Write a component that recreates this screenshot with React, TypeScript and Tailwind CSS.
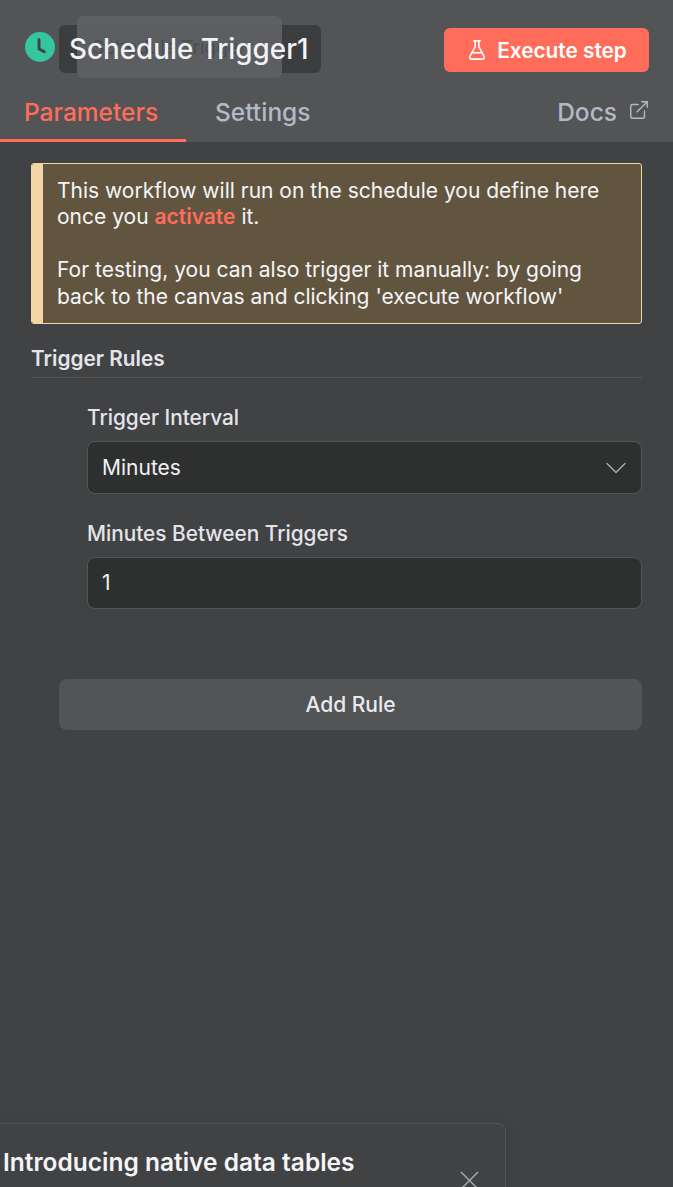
import { ChevronDown, ExternalLink, FlaskConical, X } from 'lucide-react';

const font = "font-['Inter',sans-serif]";

function ClockBadge() {
  return (
    <svg className="ml-[1px] mt-[-6px] h-[30px] w-[30px] shrink-0" viewBox="0 0 31 31">
      <circle cx="15.5" cy="15.5" r="15.5" fill="#35c6a0" />
      <path d="M14.5 8v9.5l5.5 3" fill="none" stroke="#414244" strokeWidth="3" strokeLinecap="round" strokeLinejoin="round" />
    </svg>
  );
}

function Header() {
  return (
    <div className="bg-[#535456]">
      <div className="flex h-[100px] items-center pl-[24px] pr-[24px]">
        <ClockBadge />
        <div className="relative ml-[4px] mt-[-2px] flex h-[48px] w-[262px] items-center rounded-[6px] bg-[#3c3d3f] pl-[10px]">
          <div className="absolute left-[18px] top-[-9px] h-[62px] w-[205px] rounded-[6px] bg-[#5f6265]/90" />
          <span className="absolute left-[33px] top-[10px] text-[19px] leading-[26px] text-[#4b4d4f]">Schedule Trigger</span>
          <span className="relative text-[27.8px] font-medium leading-[34px] text-[#f1f2f6]">Schedule Trigger1</span>
        </div>
        <button className="ml-auto flex h-[44px] w-[205px] items-center justify-center gap-[9px] rounded-[6px] bg-[#ff6d5a] pt-[2px] text-[20.8px] font-semibold text-white">
          <FlaskConical size={22} strokeWidth={1.75} className="mt-[-2px]" />
          Execute step
        </button>
      </div>
      <div className="flex h-[42px] items-stretch justify-between pr-[23px]">
        <div className="flex items-stretch">
          <div className="flex w-[186px] items-start border-b-[3px] border-[#ff6d5a] pl-[24px] text-[24.5px] font-medium leading-[24px] text-[#ff6d5a]">Parameters</div>
          <div className="ml-[29px] text-[24.5px] font-medium leading-[24px] text-[#b4b9c6]">Settings</div>
        </div>
        <div className="flex items-start gap-[11px] text-[24.5px] font-medium leading-[24px] text-[#b4b9c6]">
          Docs
          <ExternalLink size={22} strokeWidth={1.5} className="mt-[-1px]" />
        </div>
      </div>
    </div>
  );
}

function Field({ label, value, select, tall }: { label: string; value: string; select?: boolean; tall?: boolean }) {
  return (
    <div>
      <div className="mb-[10px] text-[20.8px] font-medium leading-[26px] text-[#e4e5ea]">{label}</div>
      <div className={`flex items-center justify-between rounded-[8px] border border-[#545558] bg-[#2e302f] pl-[14px] pr-[14px] text-[21px] text-[#f1f2f6] ${tall ? 'h-[53px]' : 'h-[52px]'}`}>
        {value}
        {select && <ChevronDown size={36} strokeWidth={0.9} className="mr-[-7px] text-[#a9acb6]" />}
      </div>
    </div>
  );
}

export default function App() {
  return (
    <div className={`${font} relative h-[1187px] w-[673px] overflow-hidden bg-[#414244]`}>
      <Header />
      <div className="pl-[31px] pr-[31px] pt-[21px]">
        <div className="flex h-[161px] overflow-hidden rounded-[3px] border border-[#f4d5a4] bg-[#625540]">
          <div className="w-[11px] shrink-0 bg-[#f4d5a4]" />
          <div className="pl-[14px] pt-[14px] text-[21px] leading-[26.4px] text-[#f5f5f7]">
            <p>This workflow will run on the schedule you define here</p>
            <p>
              once you <span className="font-semibold text-[#ff6d5a]">activate</span> it.
            </p>
            <p className="mt-[26.4px]">For testing, you can also trigger it manually: by going</p>
            <p>back to the canvas and clicking 'execute workflow'</p>
          </div>
        </div>
        <div className="mt-[22px] border-b border-[#535456] pb-[5px] text-[20.8px] font-semibold leading-[26px] text-[#e4e5ea]">Trigger Rules</div>
        <div className="pl-[56px] pt-[27px]">
          <Field label="Trigger Interval" value="Minutes" select tall />
          <div className="mt-[27px]">
            <Field label="Minutes Between Triggers" value="1" />
          </div>
        </div>
        <button className="ml-[28px] mt-[70px] flex h-[51px] w-[583px] items-center justify-center rounded-[8px] bg-[#535456] text-[21px] font-medium text-[#e9eaef]">Add Rule</button>
      </div>
      <div className="absolute left-[-20px] top-[1123px] h-[120px] w-[526px] rounded-[8px] border border-[#535456] bg-[#414244] pl-[22px] pt-[23px] shadow-[0_0_16px_rgba(0,0,0,0.06)]">
        <div className="text-[24.5px] font-semibold leading-[30px] text-[#f5f5f7]">Introducing native data tables</div>
        <X size={33} strokeWidth={1} className="absolute left-[472px] top-[40px] text-[#a9acb6]" />
      </div>
    </div>
  );
}
